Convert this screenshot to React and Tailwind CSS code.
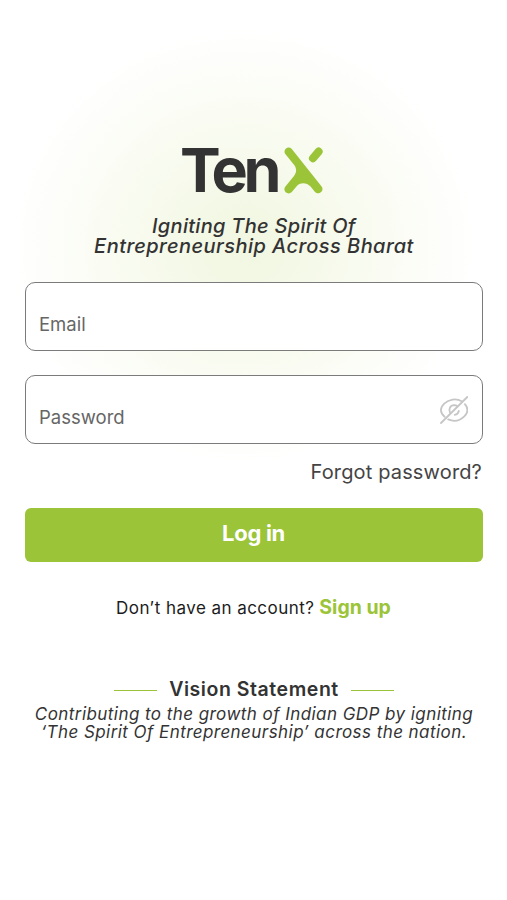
function LogoMark() {
  return (
    <svg viewBox="0 0 39 47" className="w-[39px] h-[47px]" fill="#9bc438" aria-hidden="true">
      <path d="M1.1 6.7 C-1.3 3 3.9 -1.8 7.6 1.7 L37.6 39.4 C40.8 44 34.6 48.6 31 45 L26.6 39.5 C23 35.7 17 34.9 13.3 38.6 L7.8 45.1 C4 48.7 -1.8 44.2 1.2 39.8 L10 29 C12.7 25.4 12.9 21.6 10.2 18 Z" />
      <path d="M34.6 4.6 L29 11.3" stroke="#9bc438" strokeWidth="8" strokeLinecap="round" />
    </svg>
  );
}

function HiddenEye() {
  return (
    <svg viewBox="0 0 28 28" className="w-7 h-7" fill="none" stroke="#c6c6c6" strokeWidth="1.8" strokeLinecap="round" aria-hidden="true">
      <path d="M1 27 L27.3 1" />
      <path d="M4.6 20.7 C-.2 16.8 -.2 11.7 4.2 7.6 C8.9 3.2 16.2 2.1 21.7 5.2" />
      <path d="M24.9 8.2 C28.3 12.1 28.1 16.6 24.3 20.3 C20 24.6 13.8 25.8 8.2 23.4" />
      <path d="M10.2 16.9 C8 13.5 10.1 9.4 14.2 9.2 C15.6 9.2 16.6 9.6 17.4 10.4" />
      <path d="M18.8 14.9 C18.5 17 16.9 18.6 14.7 18.9" />
    </svg>
  );
}

function Field({ label, children }) {
  return (
    <div className="flex h-[69px] justify-between rounded-[10px] border-[1.5px] border-[#7b7b7b] bg-white pl-[13px] pr-[14px]">
      <span className="pt-[27px] text-[18.5px] leading-7 text-[#666]">{label}</span>
      {children}
    </div>
  );
}

export default function App() {
  return (
    <main className="h-[900px] w-[507px] bg-white bg-[radial-gradient(ellipse_235px_220px_at_244px_246px,#f1f7e1_0%,#f5f9e9_30%,#fafcf3_60%,#fdfefb_85%,#ffffff_100%)] pl-[25px] pr-6 pt-[147px] font-['Inter',sans-serif] text-[#333]">
      <div className="flex h-[47px] pl-[155px]">
        <h1 className="w-[104px] text-[61px] leading-[46px] font-bold tracking-[-4.4px]">Ten</h1>
        <LogoMark />
      </div>

      <p className="mt-[22px] text-center text-[20px] leading-5 font-medium italic whitespace-nowrap">
        <span className="block tracking-[0.3px]">Igniting The Spirit Of</span>
        <span className="block tracking-[0.45px]">Entrepreneurship Across Bharat</span>
      </p>

      <form className="mt-[26px] flex flex-col gap-6">
        <Field label="Email" />
        <Field label="Password">
          <span className="pt-[20px]">
            <HiddenEye />
          </span>
        </Field>
        <a className="-mt-[10px] mr-px self-end text-[20px] leading-7 tracking-[0.15px] text-[#444]">Forgot password?</a>
        <button type="button" className="-mt-[2px] h-[54px] rounded-md bg-[#9bc438] pr-px pb-1 text-[22px] leading-7 font-bold tracking-[-0.3px] text-white">
          Log in
        </button>
      </form>

      <p className="mt-[31px] flex items-baseline justify-center gap-[5px] pr-px leading-7 whitespace-nowrap">
        <span className="text-[17px] tracking-[0.45px] text-[#1c1c1c]">Don’t have an account?</span>
        <a className="text-[19.5px] font-bold text-[#9bc438]">Sign up</a>
      </p>

      <section className="mt-[54px]">
        <div className="flex items-center justify-center gap-3">
          <span className="h-px w-[43px] bg-[#9bc438]" />
          <h2 className="-mt-px mb-px text-[19.5px] leading-7 font-semibold tracking-[0.55px]">Vision Statement</h2>
          <span className="h-px w-[43px] bg-[#9bc438]" />
        </div>
        <p className="mt-px text-center text-[17px] leading-[18px] tracking-[0.44px] italic whitespace-nowrap">
          Contributing to the growth of Indian GDP by igniting
          <br />
          ‘The Spirit Of Entrepreneurship’ across the nation.
        </p>
      </section>
    </main>
  );
}
